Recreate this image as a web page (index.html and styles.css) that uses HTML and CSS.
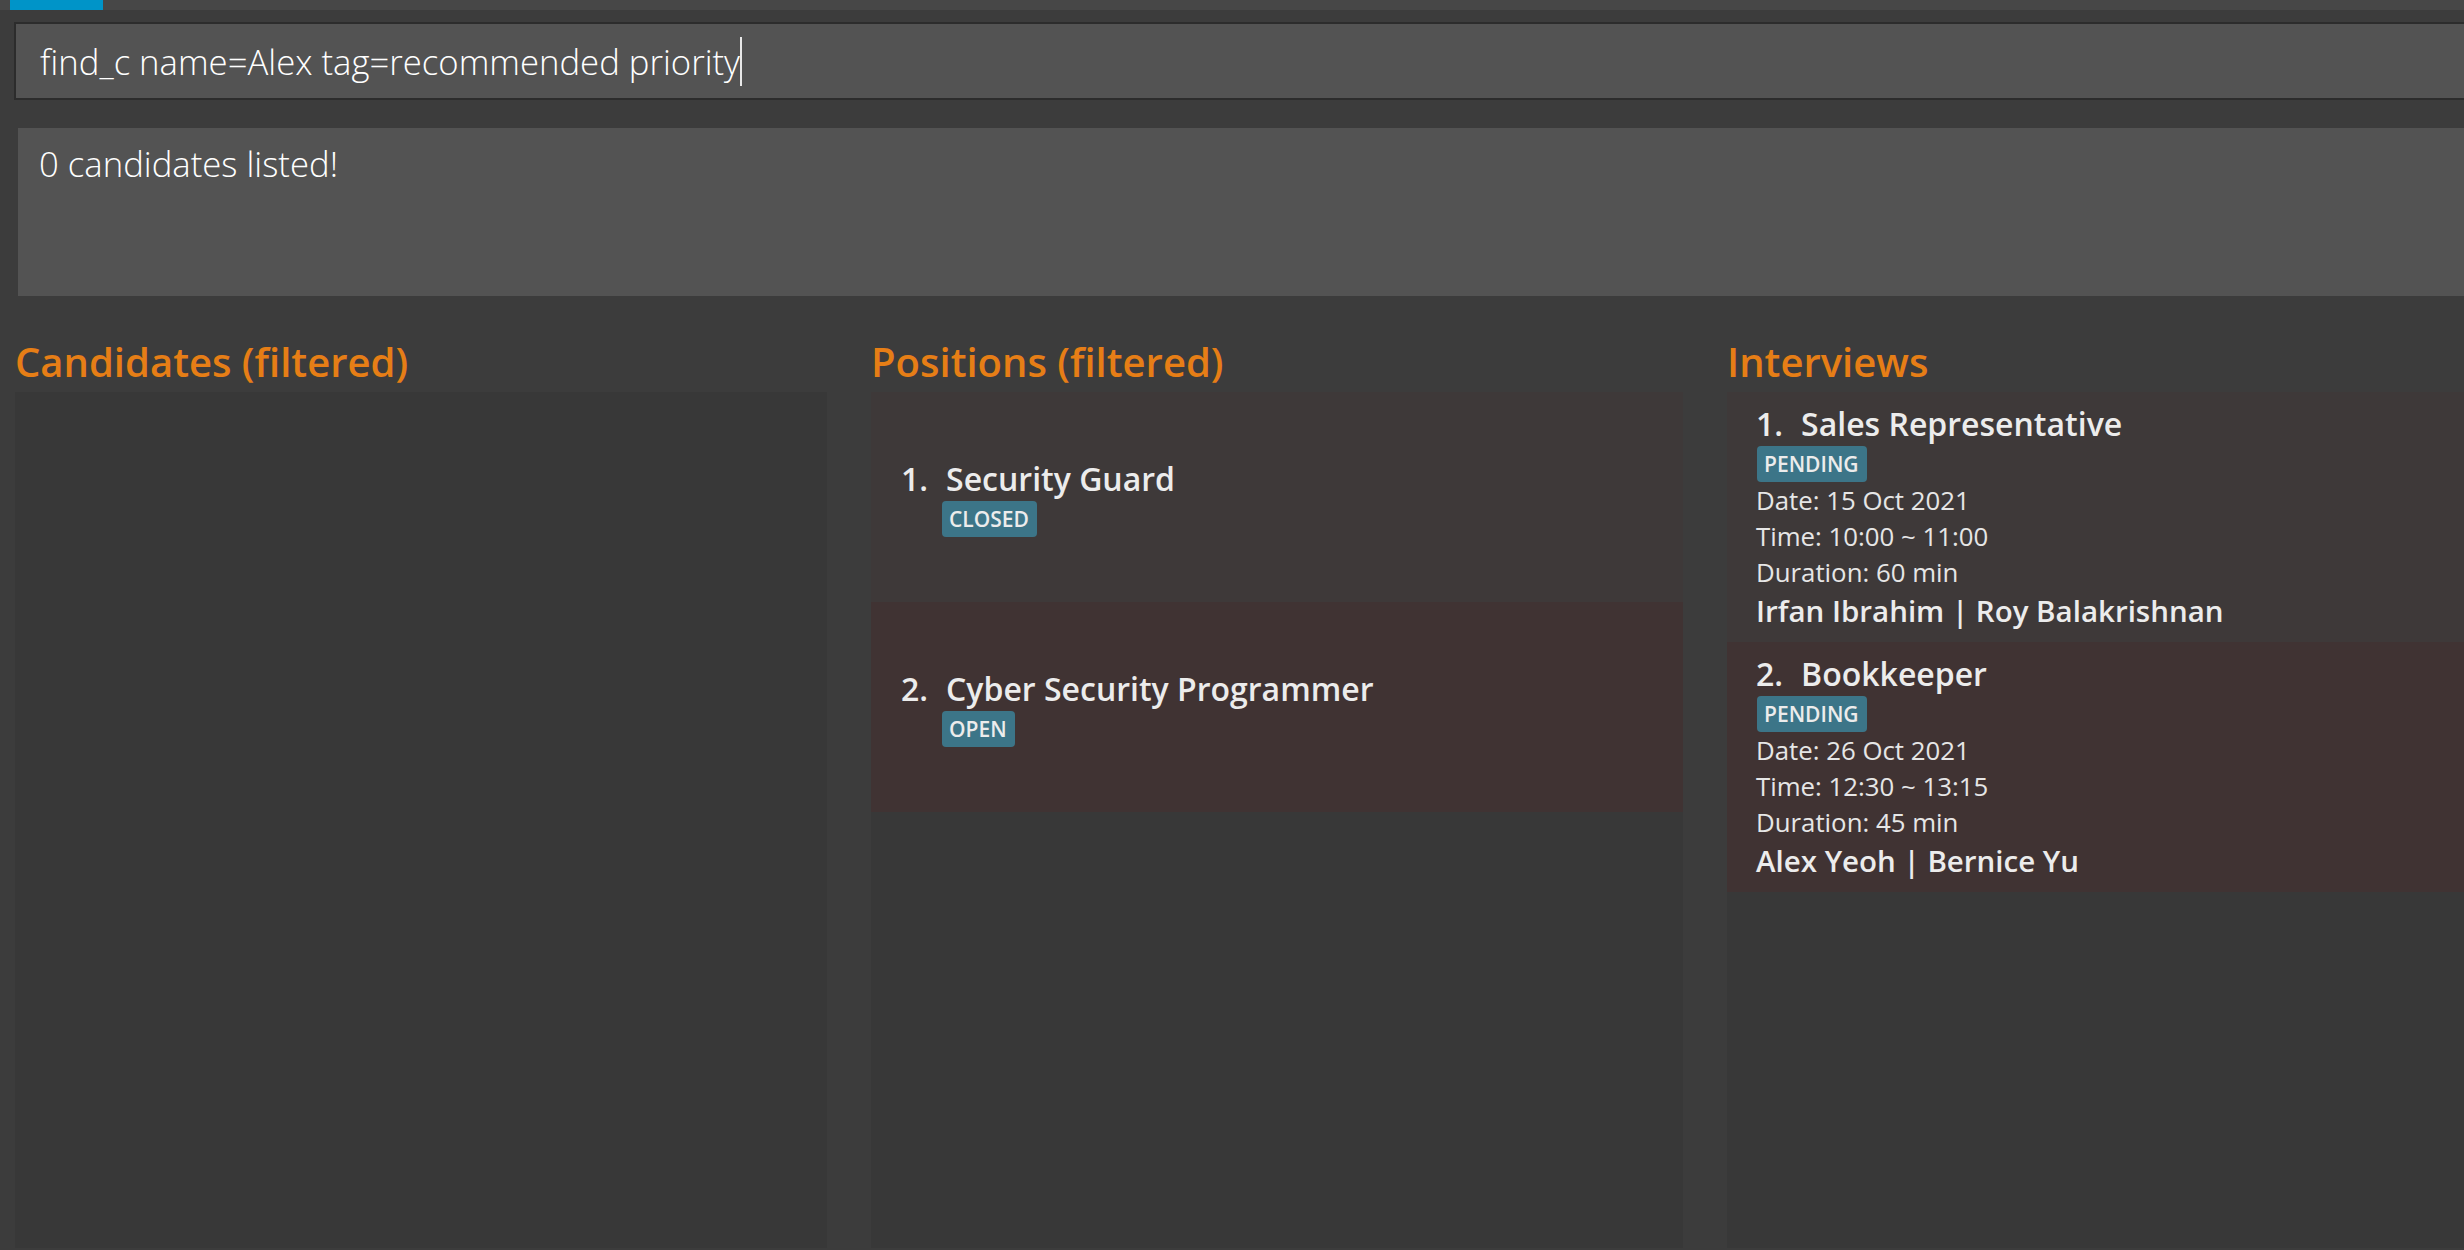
FILE: index.html
```html
<!DOCTYPE html>
<html lang="en">
<head>
<meta charset="utf-8">
<title>HR Manager</title>
<link rel="stylesheet" href="styles.css">
</head>
<body>
<div class="topbar"><div class="tab"></div></div>
<div class="command"><span class="command-text">find_c name=Alex tag=recommended priority</span><span class="caret"></span></div>
<div class="result">0 candidates listed!</div>
<div class="columns">
  <section class="column">
    <h2 class="heading">Candidates (filtered)</h2>
    <div class="panel"></div>
  </section>
  <section class="column">
    <h2 class="heading">Positions (filtered)</h2>
    <div class="panel">
      <div class="pos-card odd">
        <div class="title"><span class="num">1.</span><span class="name">Security Guard</span></div>
        <span class="badge pos-badge">CLOSED</span>
      </div>
      <div class="pos-card even">
        <div class="title"><span class="num">2.</span><span class="name">Cyber Security Programmer</span></div>
        <span class="badge pos-badge">OPEN</span>
      </div>
    </div>
  </section>
  <section class="column">
    <h2 class="heading">Interviews</h2>
    <div class="panel">
      <div class="int-card odd">
        <div class="title"><span class="num">1.</span><span class="name">Sales Representative</span></div>
        <span class="badge int-badge">PENDING</span>
        <div class="detail">Date: 15 Oct 2021</div>
        <div class="detail">Time: 10:00 ~ 11:00</div>
        <div class="detail">Duration: 60 min</div>
        <div class="people">Irfan Ibrahim | Roy Balakrishnan</div>
      </div>
      <div class="int-card even">
        <div class="title"><span class="num">2.</span><span class="name">Bookkeeper</span></div>
        <span class="badge int-badge">PENDING</span>
        <div class="detail">Date: 26 Oct 2021</div>
        <div class="detail">Time: 12:30 ~ 13:15</div>
        <div class="detail">Duration: 45 min</div>
        <div class="people">Alex Yeoh | Bernice Yu</div>
      </div>
    </div>
  </section>
</div>
</body>
</html>
```

FILE: styles.css
```css
* { box-sizing: border-box; }

html, body {
  margin: 0;
  padding: 0;
}

body {
  width: 2464px;
  height: 1250px;
  overflow: hidden;
  background: #3c3c3c;
  font-family: "Open Sans", "Noto Sans", sans-serif;
  color: #ececec;
  display: flex;
  flex-direction: column;
}

.topbar {
  height: 10px;
  background: #474747;
  flex: none;
}

.tab {
  margin-left: 10px;
  width: 93px;
  height: 10px;
  background: #0094c8;
}

.command {
  flex: none;
  margin-top: 12px;
  margin-left: 14px;
  height: 78px;
  border: 2px solid #2c2c2c;
  border-right: none;
  background: #535353;
  padding-left: 24px;
  display: flex;
  align-items: center;
  font-weight: 300;
  font-size: 34.7px;
  color: #ffffff;
  white-space: nowrap;
}

.caret {
  display: inline-block;
  width: 2px;
  height: 49px;
  background: #e8e8e8;
  margin-left: 0;
}

.result {
  flex: none;
  margin-top: 28px;
  margin-left: 18px;
  height: 168px;
  background: #535353;
  padding: 12px 21px;
  font-weight: 300;
  font-size: 34.7px;
  line-height: 47px;
  color: #ffffff;
}

.columns {
  flex: 1;
  min-height: 0;
  margin-top: 39px;
  padding-left: 15px;
  padding-bottom: 2px;
  display: grid;
  grid-template-columns: 812px 812px 812px;
  column-gap: 44px;
}

.column {
  display: flex;
  flex-direction: column;
  min-height: 0;
}

.heading {
  margin: 0 0 3px 0;
  font-size: 40px;
  line-height: 54px;
  font-weight: 600;
  color: #e67e16;
}

.panel {
  flex: 1;
  background: #383838;
  min-height: 0;
}

.odd { background: #3e3939; }
.even { background: #403333; }

.title {
  display: flex;
  gap: 18px;
  font-size: 32px;
  line-height: 40px;
  font-weight: 600;
  color: #ececec;
  white-space: nowrap;
}

.badge {
  display: inline-block;
  background: #3c7588;
  color: #ececec;
  font-size: 21px;
  font-weight: 600;
  line-height: 28px;
  padding: 4px 8px 4px 7px;
  border-radius: 4px;
}

.pos-card {
  height: 210px;
  padding: 67px 30px 0 30px;
}

.pos-badge {
  margin-top: 2px;
  margin-left: 41px;
}

.int-card {
  height: 250px;
  padding: 12px 29px 0 29px;
}

.int-badge {
  margin-top: 2px;
  margin-left: 1px;
}

.detail {
  font-size: 25.8px;
  line-height: 36px;
  font-weight: 400;
  color: #e6e6e6;
  white-space: nowrap;
}

.people {
  font-size: 29.5px;
  line-height: 41px;
  font-weight: 600;
  color: #ececec;
  white-space: nowrap;
}
```
